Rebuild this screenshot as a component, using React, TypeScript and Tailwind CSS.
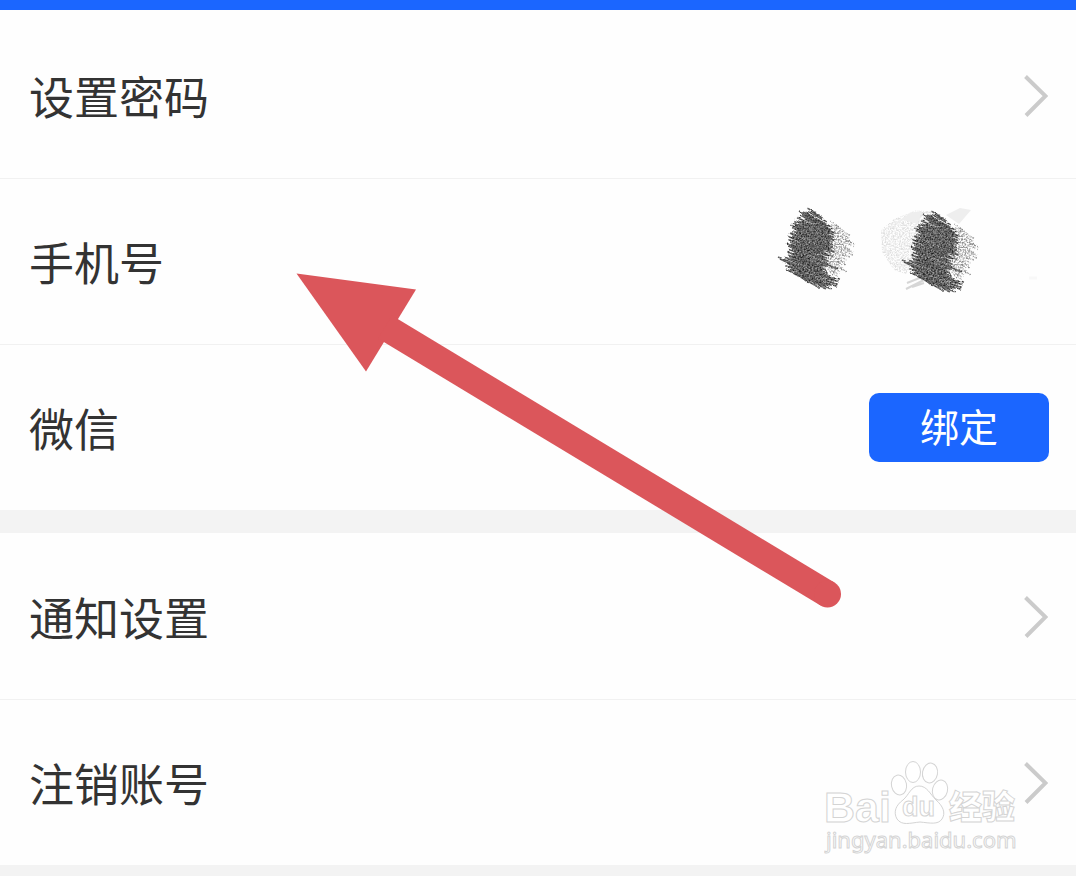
import React from 'react';

interface SettingItem {
    id: string;
    label: string;
    kind: 'link' | 'phone' | 'bind';
}

const accountItems: SettingItem[] = [
    { id: 'password', label: '设置密码', kind: 'link' },
    { id: 'phone', label: '手机号', kind: 'phone' },
    { id: 'wechat', label: '微信', kind: 'bind' },
];

const generalItems: SettingItem[] = [
    { id: 'notice', label: '通知设置', kind: 'link' },
    { id: 'close', label: '注销账号', kind: 'link' },
];

// brush strokes of the scribble: x1, y1, x2, y2
const darkStrokes = [
    [50, 21, 64, 29], [41, 22, 72, 39], [42, 26, 74, 43], [37, 29, 73, 46],
    [36, 33, 74, 50], [34, 35, 72, 53], [33, 38, 71, 56], [35, 42, 70, 58],
    [32, 45, 72, 61], [30, 49, 69, 64], [27, 54, 68, 67], [31, 57, 68, 71],
    [29, 61, 67, 75], [29, 64, 66, 80], [27, 67, 66, 84],
    [26, 73, 73, 89], [28, 77, 76, 92], [32, 81, 74, 95], [41, 85, 68, 96],
    [36, 49, 66, 61], [32, 53, 66, 65], [34, 61, 62, 80],
    [44, 24, 65, 35], [38, 67, 60, 82],
];

const thinStrokes = [
    [18, 67, 64, 86], [20, 69, 50, 83], [26, 79, 60, 98], [48, 89, 66, 99],
    [26, 53, 40, 61], [30, 43, 42, 50], [39, 21, 52, 28], [33, 33, 44, 38],
    [56, 70, 78, 79], [60, 86, 80, 89],
];

const lightStrokes = [
    [73, 34, 85, 42], [72, 38, 90, 47], [71, 41, 92, 52], [70, 46, 94, 55],
    [70, 51, 89, 59], [68, 54, 92, 63], [68, 58, 88, 66], [66, 61, 84, 70],
    [64, 65, 84, 74], [60, 68, 84, 79], [57, 72, 80, 83], [66, 76, 78, 87],
];

// every stroke is made of three bristles whose ends do not line up
const toBristles = (strokes: number[][]) =>
    strokes.flatMap(([x1, y1, x2, y2], i) =>
        [-1, 0, 1].map(n => {
            const start = (((i * 7 + n * 5 + 5) % 9) - 3) * 0.9;
            const end = (((i * 5 + n * 4 + 4) % 9) - 5) * 0.9;
            return [x1 + start, y1 + n * 1.5 + start / 2, x2 + end, y2 + n * 1.5 + end / 2];
        })
    );

const darkBristles = toBristles(darkStrokes);
const lightBristles = toBristles(lightStrokes);

const ChevronIcon: React.FC = () => (
    <svg className="w-6 h-[42px] shrink-0" viewBox="0 0 24 42" fill="none" stroke="#cbcbcb" strokeWidth="4" aria-hidden="true">
        <path d="M1.5 1.5 L21.5 21 L2 40.5" />
    </svg>
);

const Scribble: React.FC = () => (
    <>
        <g stroke="#8a8a8a" strokeWidth="1.6" filter="url(#sparse)">
            {lightBristles.map(([x1, y1, x2, y2], i) => (
                <line key={i} x1={x1} y1={y1} x2={x2} y2={y2} />
            ))}
        </g>
        <g stroke="#595959" strokeWidth="1.6" filter="url(#grain)">
            {darkBristles.concat(thinStrokes).map(([x1, y1, x2, y2], i) => (
                <line key={i} x1={x1} y1={y1} x2={x2} y2={y2} />
            ))}
        </g>
    </>
);

const MaskedNumber: React.FC = () => (
    <svg className="block w-[300px] h-[120px] shrink-0" viewBox="0 0 300 120" role="img" aria-label="手机号已隐藏">
        <defs>
            <filter id="grain" x="-10%" y="-10%" width="120%" height="120%" colorInterpolationFilters="sRGB">
                <feTurbulence type="fractalNoise" baseFrequency="0.2" numOctaves="2" seed="4" result="warp" />
                <feDisplacementMap in="SourceGraphic" in2="warp" scale="3" xChannelSelector="R" yChannelSelector="G" result="rough" />
                <feTurbulence type="fractalNoise" baseFrequency="0.63" numOctaves="4" seed="9" />
                <feColorMatrix values="0.8 0 0 0 -0.04  0.8 0 0 0 -0.04  0.8 0 0 0 -0.04  0 0 0 0 1" />
                <feComposite in2="rough" operator="in" />
            </filter>
            <filter id="sparse" x="-10%" y="-10%" width="120%" height="120%" colorInterpolationFilters="sRGB">
                <feTurbulence type="fractalNoise" baseFrequency="0.63" numOctaves="4" seed="2" />
                <feColorMatrix values="0 0 0 0 0  0 0 0 0 0  0 0 0 0 0  3 0 0 0 -1.1" result="dots" />
                <feComposite in="SourceGraphic" in2="dots" operator="in" />
            </filter>
        </defs>
        <Scribble />
        <path d="M121 40 L134 29 L157 20 L176 22 L160 46 L156 68 L146 84 L134 80 L122 62 Z" fill="#e0e0e0" filter="url(#sparse)" />
        <path d="M130 37 L150 23 L162 21 L158 34 L143 30 Z M186 25 L200 18 L211 20 L199 34 Z" fill="#eeeeee" />
        <g stroke="#d6d6d6" strokeWidth="2">
            <path d="M162 87 L147 93 M166 89 L146 99 M164 93 L152 97" />
        </g>
        <g transform="translate(124 3)">
            <Scribble />
        </g>
        <path d="M269 88 L277 88" stroke="#f8f8f8" strokeWidth="3" />
    </svg>
);

const ArrowMark: React.FC = () => (
    <svg className="absolute left-[296px] top-[273px] w-[546px] h-[336px] pointer-events-none" viewBox="296 273 546 336" aria-hidden="true">
        <path d="M296.5 273.5 L416 289.5 L366 371.5 Z" fill="#db565b" />
        <path d="M385 327 L827.5 594" stroke="#db565b" strokeWidth="27" />
        <circle cx="827.5" cy="594" r="13.5" fill="#db565b" />
    </svg>
);

const Watermark: React.FC = () => (
    <svg className="absolute right-[56px] bottom-[8px] w-[196px] h-[98px] pointer-events-none" viewBox="824 758 196 98" fill="#ffffff" stroke="#d4d4d4" aria-hidden="true">
        <text x="824" y="821" fontSize="43" fontWeight="700" fontFamily="'Liberation Sans', sans-serif">Bai</text>
        <g>
            <ellipse cx="899" cy="784" rx="7.5" ry="10" transform="rotate(-12 899 784)" />
            <ellipse cx="913" cy="771" rx="7.5" ry="10.5" />
            <ellipse cx="930" cy="772" rx="7.5" ry="10" transform="rotate(10 930 772)" />
            <ellipse cx="940" cy="789" rx="7.5" ry="10" transform="rotate(14 940 789)" />
            <path d="M919 785 C927 785 930 793 936 799 C943 805 946 812 942 818 C938 824 930 822 920 821 C910 822 902 825 897 818 C893 811 896 804 903 799 C909 794 911 785 919 785 Z" />
        </g>
        <text x="902" y="815" fontSize="27" fontWeight="700" fontFamily="'Liberation Sans', sans-serif">du</text>
        <text x="949" y="818" fontSize="33" fontWeight="900" fontFamily="'Noto Sans CJK SC', sans-serif">经验</text>
        <text x="826" y="847" fontSize="22" fontWeight="400" fontFamily="'Noto Sans', sans-serif">jingyan.baidu.com</text>
    </svg>
);

const SettingRow: React.FC<{ item: SettingItem }> = ({ item }) => {
    if (item.kind === 'link') {
        return (
            <button type="button" className="flex w-full items-center justify-between py-[50px] pl-[29px] pr-7 text-left">
                <span className="pt-[1px] leading-[64px]">{item.label}</span>
                <ChevronIcon />
            </button>
        );
    }

    return (
        <div className="flex items-center justify-between py-[50px] pl-[29px] pr-[27px]">
            <span className="pt-[1px] leading-[64px]">{item.label}</span>
            {item.kind === 'phone' && (
                <div className="-my-10 -mr-[11px] pb-[23px]">
                    <MaskedNumber />
                </div>
            )}
            {item.kind === 'bind' && (
                <button type="button" className="-my-1 w-[180px] rounded-[10px] bg-[#1b66ff] pb-[5px] text-[39px] leading-[64px] text-white">
                    绑定
                </button>
            )}
        </div>
    );
};

const App: React.FC = () => {
    return (
        <main className="relative min-h-screen overflow-hidden bg-[#f3f3f3] font-['Noto_Sans_CJK_SC',sans-serif] text-[45px] text-[#333333]">
            <div className="h-[10px] bg-[#1b66ff]" />
            <ul className="divide-y divide-[#f1f1f1] bg-[#fefefe] pt-[3px]">
                {accountItems.map(item => (
                    <li key={item.id}>
                        <SettingRow item={item} />
                    </li>
                ))}
            </ul>
            <div className="relative mt-[23px]">
                <ul className="divide-y divide-[#f1f1f1] bg-[#fefefe] pt-[1px]">
                    {generalItems.map(item => (
                        <li key={item.id}>
                            <SettingRow item={item} />
                        </li>
                    ))}
                </ul>
                <Watermark />
            </div>
            <ArrowMark />
        </main>
    );
};

export default App;
